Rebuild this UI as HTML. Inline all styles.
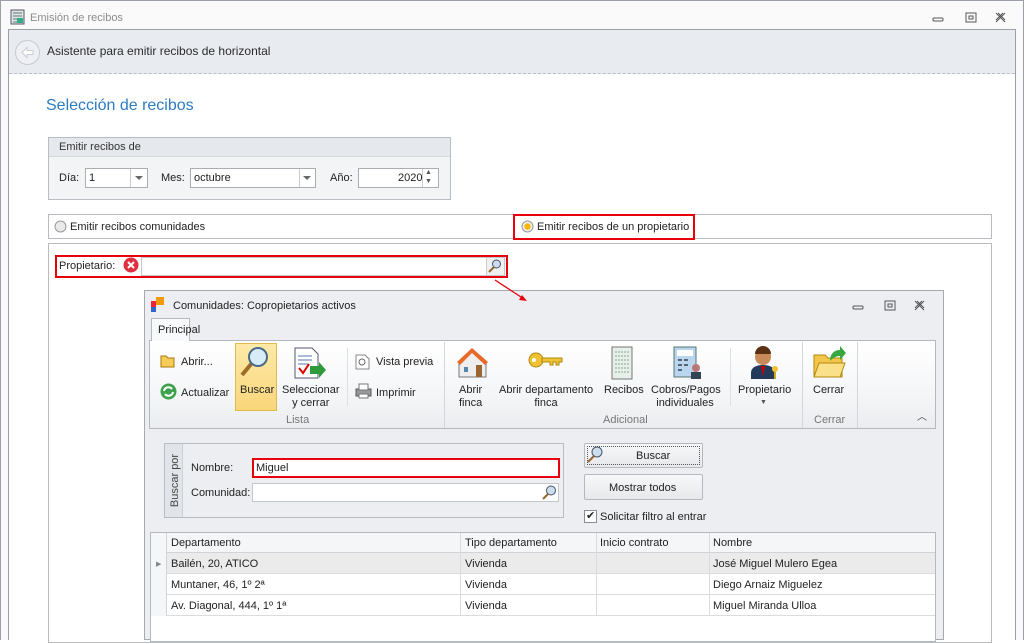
<!DOCTYPE html>
<html><head><meta charset="utf-8"><style>
*{margin:0;padding:0;box-sizing:border-box}
body{width:1024px;height:640px;overflow:hidden;background:#fff;font-family:"Liberation Sans",sans-serif;font-size:11px;color:#222;position:relative}
.a{position:absolute}
.t{position:absolute;white-space:nowrap;line-height:13px}
.inp{position:absolute;background:#fff;border:1px solid #abadb3}
.btn{position:absolute;border:1px solid #b4b9c0;border-radius:2px;background:linear-gradient(#f7f8f9,#e6e8eb);text-align:center}
.red{position:absolute;border:2px solid #e8000b}
.ic{position:absolute}
.col{position:absolute;top:0;bottom:0;border-left:1px solid #d8dbe0}
</style></head><body>
<div class="a" style="left:0;top:0;width:1024px;height:640px;border:1px solid #9ba0a8;border-bottom:none;background:#fafafa"></div>
<svg class="ic" style="left:10px;top:9px" width="16" height="16"><rect x="1" y="1" width="13" height="14" fill="#dfe5e5" stroke="#556" /><path d="M3 4h9M3 7h9M3 10h9M3 13h9" stroke="#677" /><rect x="7" y="9" width="6" height="5" fill="#3a8" /></svg>
<div class="t" style="left:30px;top:12px;color:#8c8c8c">Emisión de recibos</div>
<svg class="ic" style="left:932px;top:12px" width="80" height="12" fill="none" stroke="#555"><rect x="1" y="6" width="10" height="3" rx="1"/><rect x="34" y="1" width="10" height="9"/><rect x="37" y="4" width="4" height="3"/><path d="M64 1l9 9M73 1l-9 9M66 1l7 7M71 1l-7 7"/></svg>
<div class="a" style="left:8px;top:29px;width:1008px;height:611px;border-left:1px solid #9ba0a8;border-top:1px solid #9ba0a8;border-right:1px solid #9ba0a8;background:#fff"></div>
<div class="a" style="left:9px;top:30px;width:1006px;height:44px;background:#e8ebef;border-bottom:1px dashed #b9bec6"></div>
<svg class="ic" style="left:14px;top:39px" width="27" height="27"><circle cx="13.5" cy="13.5" r="12" fill="#eef0f3" stroke="#c7cbd1"/><path d="M8 13.5l5-5v3h6v4h-6v3z" fill="#fff" stroke="#c9cdd3"/></svg>
<div class="t" style="left:47px;top:45px;font-size:12px;color:#2b2b2b">Asistente para emitir recibos de horizontal</div>
<div class="t" style="left:46px;top:97px;font-size:16px;line-height:18px;color:#2d7bc3">Selección de recibos</div>
<div class="a" style="left:48px;top:137px;width:403px;height:63px;border:1px solid #b9bdc3;background:#f3f4f6"></div>
<div class="a" style="left:49px;top:138px;width:401px;height:19px;background:#e5e8ec;border-bottom:1px solid #d4d7dc"></div>
<div class="t" style="left:59px;top:141px;color:#333">Emitir recibos de</div>
<div class="t" style="left:59px;top:172px">Día:</div>
<div class="inp" style="left:85px;top:168px;width:63px;height:20px"><span class="t" style="left:3px;top:3px">1</span><div class="a" style="left:44px;top:0;width:1px;height:18px;background:#ccc"></div><div class="a" style="left:49px;top:7px;border:4px solid transparent;border-top:4px solid #666"></div></div>
<div class="t" style="left:161px;top:172px">Mes:</div>
<div class="inp" style="left:190px;top:168px;width:126px;height:20px"><span class="t" style="left:3px;top:3px">octubre</span><div class="a" style="left:108px;top:0;width:1px;height:18px;background:#ccc"></div><div class="a" style="left:112px;top:7px;border:4px solid transparent;border-top:4px solid #666"></div></div>
<div class="t" style="left:330px;top:172px">Año:</div>
<div class="inp" style="left:358px;top:168px;width:81px;height:20px"><span class="t" style="left:39px;top:3px">2020</span><div class="a" style="left:63px;top:0;width:1px;height:18px;background:#ccc"></div><div class="t" style="left:66px;top:-1px;font-size:7px;line-height:9px;color:#555">▲<br>▼</div></div>
<div class="a" style="left:48px;top:214px;width:944px;height:25px;border:1px solid #b9bdc3"></div>
<svg class="ic" style="left:54px;top:220px" width="13" height="13"><circle cx="6.5" cy="6.5" r="5.5" fill="#e9e9e9" stroke="#999"/></svg>
<div class="t" style="left:70px;top:221px">Emitir recibos comunidades</div>
<div class="red" style="left:513px;top:214px;width:182px;height:26px"></div>
<svg class="ic" style="left:521px;top:220px" width="13" height="13"><circle cx="6.5" cy="6.5" r="5.5" fill="#eee" stroke="#999"/><circle cx="6.5" cy="6.5" r="3.2" fill="#f5b800"/></svg>
<div class="t" style="left:537px;top:221px">Emitir recibos de un propietario</div>
<div class="a" style="left:48px;top:243px;width:944px;height:400px;border:1px solid #b9bdc3"></div>
<div class="red" style="left:55px;top:255px;width:453px;height:23px"></div>
<div class="t" style="left:59px;top:260px">Propietario:</div>
<svg class="ic" style="left:123px;top:257px" width="16" height="16"><circle cx="8" cy="8" r="7.5" fill="#e03040"/><path d="M5 5l6 6M11 5l-6 6" stroke="#fff" stroke-width="2"/></svg>
<div class="inp" style="left:141px;top:257px;width:364px;height:19px;border-color:#c4c7cc"></div>
<div class="a" style="left:486px;top:258px;width:18px;height:17px;background:#eef0f2;border-left:1px solid #ccc"></div>
<svg class="ic" style="left:487px;top:258px" width="16" height="16"><circle cx="9.5" cy="6" r="4" fill="#cde" stroke="#456"/><path d="M7 9l-5 5" stroke="#963" stroke-width="2"/></svg>
<div class="a" style="left:144px;top:290px;width:800px;height:350px;border:1px solid #a5a9b0;background:#eceef1"></div>
<svg class="ic" style="left:490px;top:276px" width="40" height="28"><path d="M5 4L34 23" stroke="#e8000b" stroke-width="1.3"/><path d="M37 25l-8-1 3-5z" fill="#e8000b"/></svg>
<svg class="ic" style="left:151px;top:297px" width="14" height="16"><rect x="5" y="0" width="8" height="8" fill="#f39a0a"/><rect x="0" y="4" width="5" height="6" fill="#e23"/><rect x="0" y="10" width="5" height="5" fill="#36c"/></svg>
<div class="t" style="left:173px;top:300px">Comunidades: Copropietarios activos</div>
<svg class="ic" style="left:852px;top:300px" width="80" height="12" fill="none" stroke="#555"><rect x="1" y="6" width="10" height="3" rx="1"/><rect x="33" y="1" width="10" height="9"/><rect x="36" y="4" width="4" height="3"/><path d="M63 1l9 9M72 1l-9 9M65 1l7 7M70 1l-7 7"/></svg>
<div class="a" style="left:149px;top:340px;width:787px;height:89px;border:1px solid #b4b9c0;background:linear-gradient(#fff,#f3f4f6 70%,#eaecef)"></div>
<div class="a" style="left:151px;top:318px;width:39px;height:23px;border:1px solid #b4b9c0;border-bottom:none;background:#f8f9fa"></div>
<div class="t" style="left:158px;top:324px">Principal</div>
<div class="a" style="left:444px;top:342px;width:1px;height:86px;background:#d3d6db"></div>
<div class="a" style="left:802px;top:342px;width:1px;height:86px;background:#d3d6db"></div>
<div class="a" style="left:857px;top:342px;width:1px;height:86px;background:#d3d6db"></div>
<div class="a" style="left:347px;top:348px;width:1px;height:58px;background:#dde0e4"></div>
<div class="a" style="left:730px;top:348px;width:1px;height:58px;background:#dde0e4"></div>
<div class="t" style="left:286px;top:414px;color:#777">Lista</div>
<div class="t" style="left:603px;top:414px;color:#777">Adicional</div>
<div class="t" style="left:814px;top:414px;color:#777">Cerrar</div>
<div class="t" style="left:917px;top:411px;font-size:10px;color:#444">︿</div>
<svg class="ic" style="left:160px;top:353px" width="16" height="16"><path d="M1 3h5l2 2h6v9H1z" fill="#f5cc55" stroke="#a87a10"/></svg>
<div class="t" style="left:181px;top:356px">Abrir...</div>
<svg class="ic" style="left:160px;top:383px" width="17" height="17"><circle cx="8.5" cy="8.5" r="8" fill="#3fa34d"/><path d="M4 8a4.5 4.5 0 0 1 8-2M13 9a4.5 4.5 0 0 1-8 2" stroke="#fff" stroke-width="2" fill="none"/></svg>
<div class="t" style="left:181px;top:387px">Actualizar</div>
<div class="a" style="left:235px;top:343px;width:42px;height:68px;border:1px solid #e0b94f;background:linear-gradient(#fde9a8,#fad67a)"></div>
<svg class="ic" style="left:238px;top:345px" width="34" height="34"><path d="M14 18L4 30" stroke="#9c6a2a" stroke-width="4"/><circle cx="20" cy="12" r="9" fill="#d7ecf7" stroke="#4a6a8a" stroke-width="2"/></svg>
<div class="t" style="left:240px;top:384px">Buscar</div>
<svg class="ic" style="left:292px;top:346px" width="34" height="34"><path d="M3 2h17l6 6v24H3z" fill="#fff" stroke="#557"/><path d="M6 10h14M6 14h14M6 18h10" stroke="#57a"/><path d="M7 22l4 5 6-9" stroke="#d00" stroke-width="2" fill="none"/><path d="M18 20h9v-4l7 8-7 8v-4h-9z" fill="#2f9a3a"/></svg>
<div class="t" style="left:282px;top:384px;text-align:center;line-height:13px">Seleccionar<br>y cerrar</div>
<svg class="ic" style="left:355px;top:354px" width="15" height="16"><path d="M1 1h9l4 4v10H1z" fill="#fff" stroke="#888"/><circle cx="7" cy="8" r="3" fill="none" stroke="#666"/></svg>
<div class="t" style="left:376px;top:356px">Vista previa</div>
<svg class="ic" style="left:355px;top:383px" width="17" height="16"><rect x="1" y="6" width="15" height="7" fill="#999" stroke="#555"/><rect x="4" y="1" width="9" height="6" fill="#fff" stroke="#777"/><rect x="4" y="11" width="9" height="4" fill="#fff" stroke="#777"/></svg>
<div class="t" style="left:376px;top:387px">Imprimir</div>
<svg class="ic" style="left:456px;top:345px" width="34" height="34"><path d="M3 16L16 4l14 12v16H3z" fill="#eee" stroke="#777"/><path d="M1 17L16 3l16 14-3 3L16 8 4 20z" fill="#e86a2a"/><rect x="8" y="22" width="4" height="5" fill="#58a"/><rect x="20" y="20" width="6" height="12" fill="#963"/></svg>
<div class="t" style="left:459px;top:384px;line-height:13px">Abrir<br>finca</div>
<svg class="ic" style="left:528px;top:350px" width="36" height="20"><circle cx="8" cy="10" r="7" fill="#f1c232" stroke="#b08a10"/><circle cx="6" cy="10" r="2" fill="#fff"/><path d="M14 8h20v4h-3v3h-3v-3h-3v3h-3v-3h-8z" fill="#f1c232" stroke="#b08a10"/></svg>
<div class="t" style="left:499px;top:384px;width:94px;text-align:center;line-height:13px">Abrir departamento<br>finca</div>
<svg class="ic" style="left:610px;top:346px" width="24" height="34"><rect x="2" y="1" width="20" height="32" fill="#e6efe8" stroke="#777"/><path d="M5 6h14M5 10h14M5 14h14M5 18h14M5 22h14M5 26h14" stroke="#8a9" stroke-dasharray="2 1"/></svg>
<div class="t" style="left:604px;top:384px">Recibos</div>
<svg class="ic" style="left:672px;top:346px" width="30" height="34"><rect x="2" y="1" width="22" height="30" fill="#b9d6ee" stroke="#577"/><rect x="5" y="4" width="16" height="6" fill="#fff"/><path d="M6 14h4M12 14h4M6 19h4M12 19h4M6 24h4" stroke="#567" stroke-width="2"/><circle cx="24" cy="22" r="4" fill="#b77"/><rect x="19" y="26" width="10" height="7" fill="#345"/></svg>
<div class="t" style="left:651px;top:384px;width:68px;text-align:center;line-height:13px">Cobros/Pagos<br>individuales</div>
<svg class="ic" style="left:748px;top:346px" width="34" height="34"><circle cx="15" cy="11" r="8" fill="#c98a5a"/><path d="M7 8a8 8 0 0 1 16 0z" fill="#5a3015"/><path d="M3 33v-6c0-6 6-8 12-8s12 2 12 8v6z" fill="#233a5a"/><path d="M13 20h4l-2 10z" fill="#c00"/><circle cx="27" cy="23" r="3" fill="#f1c232"/><path d="M27 26v7" stroke="#d4a520" stroke-width="2"/></svg>
<div class="t" style="left:738px;top:384px">Propietario</div>
<div class="t" style="left:760px;top:396px;font-size:7px;color:#555">▼</div>
<svg class="ic" style="left:812px;top:345px" width="34" height="34"><path d="M2 10h11l3 3h14v19H2z" fill="#f3c64a" stroke="#b08a10"/><path d="M2 32l5-14h26l-5 14z" fill="#fbe08a" stroke="#b08a10"/><path d="M18 16c0-7 4-11 10-11V1l6 7-6 7v-4c-4 0-7 2-10 5z" fill="#36a83f"/></svg>
<div class="t" style="left:813px;top:384px">Cerrar</div>
<div class="a" style="left:164px;top:443px;width:400px;height:75px;border:1px solid #b9bdc3;background:#eceef1"></div>
<div class="a" style="left:165px;top:444px;width:18px;height:73px;background:#e1e4e8;border-right:1px solid #cdd0d5"></div>
<div class="t" style="left:149px;top:474px;transform:rotate(-90deg);font-size:11px;color:#444">Buscar por</div>
<div class="t" style="left:191px;top:462px">Nombre:</div>
<div class="red" style="left:252px;top:458px;width:308px;height:20px;background:#fff"></div>
<div class="t" style="left:256px;top:462px">Miguel</div>
<div class="t" style="left:191px;top:487px">Comunidad:</div>
<div class="inp" style="left:252px;top:483px;width:307px;height:19px;border-color:#c4c7cc"></div>
<svg class="ic" style="left:541px;top:484px" width="17" height="17"><circle cx="10" cy="6.5" r="4.5" fill="#cde" stroke="#456"/><path d="M7 10l-5 5" stroke="#963" stroke-width="2"/></svg>
<div class="btn" style="left:584px;top:443px;width:119px;height:25px"><div class="a" style="left:2px;top:2px;right:2px;bottom:2px;border:1px dotted #555"></div><span class="t" style="left:51px;top:6px">Buscar</span></div>
<svg class="ic" style="left:586px;top:445px" width="18" height="18"><circle cx="11" cy="7" r="5" fill="#cde" stroke="#456"/><path d="M8 11l-6 6" stroke="#963" stroke-width="2"/></svg>
<div class="btn" style="left:584px;top:474px;width:119px;height:26px"><span class="t" style="left:24px;top:7px">Mostrar todos</span></div>
<div class="a" style="left:584px;top:510px;width:13px;height:13px;border:1px solid #8a8e94;background:#fff"></div>
<div class="t" style="left:586px;top:510px;font-size:11px">✔</div>
<div class="t" style="left:600px;top:511px">Solicitar filtro al entrar</div>
<div class="a" style="left:150px;top:532px;width:786px;height:110px;border:1px solid #b4b9c0;background:#fff;overflow:hidden">
 <div class="a" style="left:0;top:0;width:786px;height:20px;background:#f5f6f7;border-bottom:1px solid #d0d3d8"></div>
 <div class="a" style="left:0;top:20px;width:786px;height:21px;background:#ebebeb;border-bottom:1px solid #dcdcdc"></div>
 <div class="a" style="left:0;top:41px;width:786px;height:21px;border-bottom:1px solid #dcdcdc"></div>
 <div class="a" style="left:0;top:62px;width:786px;height:21px;border-bottom:1px solid #dcdcdc"></div>
 <div class="a" style="left:0;top:0;width:16px;height:83px;background:#f5f6f7;border-right:1px solid #d0d3d8"></div>
 <div class="col" style="left:309px;height:83px"></div><div class="col" style="left:445px;height:83px"></div><div class="col" style="left:558px;height:83px"></div>
 <div class="t" style="left:5px;top:25px;font-size:7px;color:#888">▶</div>
 <div class="t" style="left:20px;top:4px">Departamento</div><div class="t" style="left:314px;top:4px">Tipo departamento</div><div class="t" style="left:449px;top:4px">Inicio contrato</div><div class="t" style="left:562px;top:4px">Nombre</div>
 <div class="t" style="left:20px;top:25px">Bailén, 20, ATICO</div><div class="t" style="left:314px;top:25px">Vivienda</div><div class="t" style="left:562px;top:25px">José Miguel Mulero Egea</div>
 <div class="t" style="left:20px;top:46px">Muntaner, 46, 1º 2ª</div><div class="t" style="left:314px;top:46px">Vivienda</div><div class="t" style="left:562px;top:46px">Diego Arnaiz Miguelez</div>
 <div class="t" style="left:20px;top:67px">Av. Diagonal, 444, 1º 1ª</div><div class="t" style="left:314px;top:67px">Vivienda</div><div class="t" style="left:562px;top:67px">Miguel Miranda Ulloa</div>
</div>
</body></html>
